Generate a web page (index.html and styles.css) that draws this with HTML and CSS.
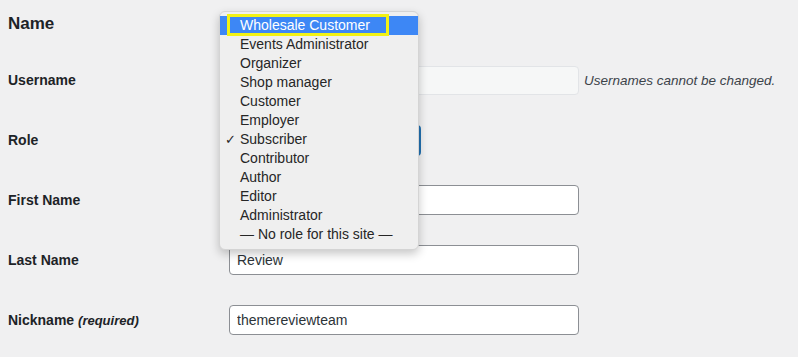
FILE: index.html
```html
<html>
<head>
    <link rel="stylesheet" href="styles.css">
</head>
<body>
  <div class="profile">
    <h2>Name</h2>
    <div class="row">
      <label>Username</label>
      <div class="field">
        <input type="text" class="input disabled" value="" disabled>
        <span class="hint">Usernames cannot be changed.</span>
      </div>
    </div>
    <div class="row">
      <label>Role</label>
      <div class="field">
        <div class="role-select"></div>
      </div>
    </div>
    <div class="row">
      <label>First Name</label>
      <div class="field">
        <input type="text" class="input" value="">
      </div>
    </div>
    <div class="row">
      <label>Last Name</label>
      <div class="field">
        <input type="text" class="input" value="Review">
      </div>
    </div>
    <div class="row">
      <label>Nickname <em>(required)</em></label>
      <div class="field">
        <input type="text" class="input" value="themereviewteam">
      </div>
    </div>

    <ul class="role-menu">
      <li class="active"><span class="marked">Wholesale Customer</span></li>
      <li>Events Administrator</li>
      <li>Organizer</li>
      <li>Shop manager</li>
      <li>Customer</li>
      <li>Employer</li>
      <li class="checked">Subscriber</li>
      <li>Contributor</li>
      <li>Author</li>
      <li>Editor</li>
      <li>Administrator</li>
      <li>&mdash; No role for this site &mdash;</li>
    </ul>
  </div>
</body>
</html>
```
FILE: styles.css
```css
html, body {
  height: 100%;
}
body {
  margin: 0;
  padding: 0;
  background: #f0f0f1;
  color: #1d2327;
  font-family: "Liberation Sans", Arial, sans-serif;
  font-size: 14px;
  overflow: hidden;
}

.profile {
  position: relative;
  padding: 0 0 0 8px;
}

.profile h2 {
  margin: 0;
  height: 50px;
  line-height: 48px;
  font-size: 17px;
  font-weight: bold;
}

.row {
  display: grid;
  grid-template-columns: 221px 1fr;
  align-items: center;
  height: 60px;
}

.row label {
  font-weight: bold;
  font-size: 14px;
}

.row label em {
  font-weight: bold;
  font-size: 13px;
}

.field {
  display: flex;
  align-items: center;
}

.input {
  width: 350px;
  height: 30px;
  box-sizing: border-box;
  padding: 0 7px;
  border: 1px solid #8c8f94;
  border-radius: 4px;
  background: #fff;
  color: #2c3338;
  font-family: "Liberation Sans", Arial, sans-serif;
  font-size: 14px;
  outline: none;
}

.input.disabled {
  background: #f6f7f7;
  border-color: #e2e4e7;
  height: 29px;
}

.hint {
  margin-left: 5px;
  font-style: italic;
  font-size: 13.5px;
  color: #3c434a;
}

.role-select {
  width: 192px;
  height: 31px;
  margin-top: 1px;
  box-sizing: border-box;
  border: 2px solid #2271b1;
  border-radius: 4px;
  background: #fff;
}

.role-menu {
  position: absolute;
  top: 11px;
  left: 219px;
  width: 200px;
  margin: 0;
  padding: 4px 0 5px;
  box-sizing: border-box;
  list-style: none;
  background: #efefef;
  border: 1px solid #d4d4d4;
  border-radius: 6px;
  box-shadow: 0 4px 10px rgba(0,0,0,.22);
}

.role-menu li {
  position: relative;
  height: 19px;
  line-height: 19px;
  padding-left: 20px;
  font-size: 14px;
  color: #262626;
  white-space: nowrap;
}

.role-menu li.active {
  background: #3d87f5;
  color: #fff;
}

.role-menu .marked {
  position: absolute;
  top: -2px;
  left: 7px;
  width: 146px;
  height: 16px;
  line-height: 16px;
  padding-left: 10px;
  border: 3px solid #f2f215;
}

.role-menu li.checked::before {
  content: "\2713";
  position: absolute;
  left: 5px;
  font-size: 13px;
}
```
